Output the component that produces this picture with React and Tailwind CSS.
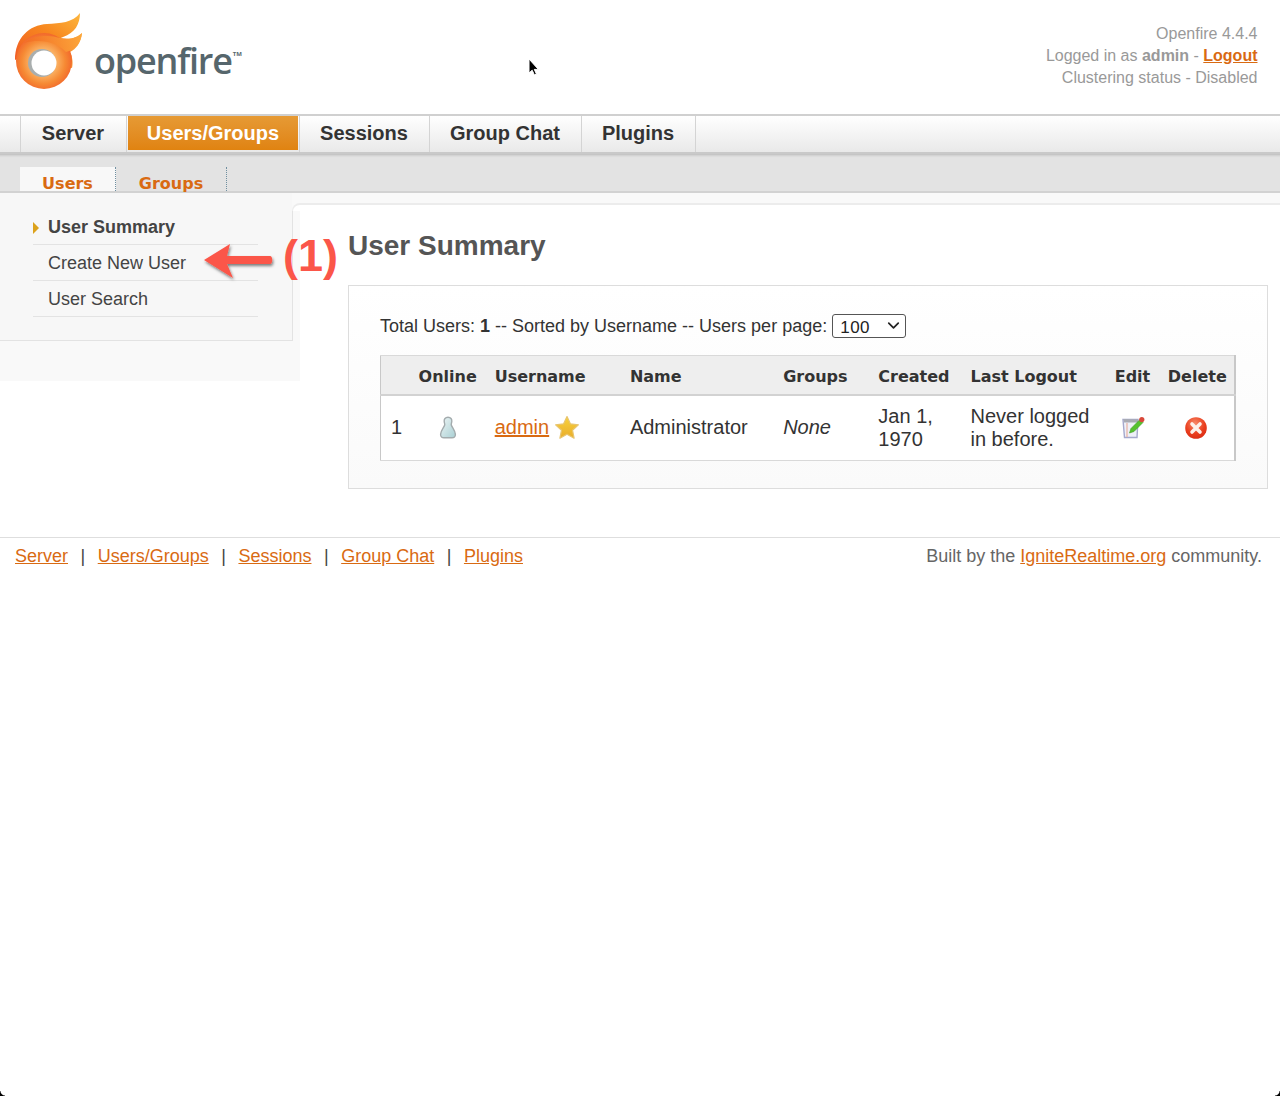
import React from 'react';
import { ChevronDown } from 'lucide-react';

const mainTabs = [
    { label: 'Server', width: 'w-[106px]' },
    { label: 'Users/Groups', width: 'w-[173px]', active: true },
    { label: 'Sessions', width: 'w-[130px]' },
    { label: 'Group Chat', width: 'w-[152px]' },
    { label: 'Plugins', width: 'w-[114px]' },
];

const footerLinks = ['Server', 'Users/Groups', 'Sessions', 'Group Chat', 'Plugins'];

const columns = [
    { label: '', width: 'w-[30px]' },
    { label: 'Online', width: 'w-[76px]' },
    { label: 'Username', width: 'w-[135px]' },
    { label: 'Name', width: 'w-[153px]' },
    { label: 'Groups', width: 'w-[95px]' },
    { label: 'Created', width: 'w-[92px]' },
    { label: 'Last Logout', width: 'w-[144px]' },
    { label: 'Edit', width: 'w-[53px]' },
    { label: 'Delete', width: 'w-[75px]' },
];

function Logo() {
    return (
        <svg width="70" height="80" viewBox="14 12 70 80" className="ml-[14px] mt-[12px] shrink-0">
            <defs>
                <linearGradient id="flameTop" x1="0" y1="1" x2="1" y2="0">
                    <stop offset="0" stopColor="#f15a24" />
                    <stop offset="0.55" stopColor="#f7871f" />
                    <stop offset="1" stopColor="#fdb73e" />
                </linearGradient>
                <linearGradient id="flameLow" x1="0" y1="0.5" x2="1" y2="0.4">
                    <stop offset="0" stopColor="#f26c25" />
                    <stop offset="1" stopColor="#fca63a" />
                </linearGradient>
                <radialGradient id="ring" cx="0.49" cy="0.52" r="0.55">
                    <stop offset="0.4" stopColor="#fbb568" />
                    <stop offset="0.7" stopColor="#f68a34" />
                    <stop offset="1" stopColor="#f1602a" />
                </radialGradient>
            </defs>
            <path d="M15 60C15 38 29 25 47 24C60 23 73 23 80 13C80 24 75 33 63 37L30 52Z" fill="url(#flameTop)" />
            <path d="M24 43C32 36 48 34 60 38C69 40 77 38 82 33C81 43 76 49 70 52C73 58 73 64 72 68L30 60Z" fill="url(#flameLow)" />
            <circle cx="44" cy="61" r="28" fill="url(#ring)" />
            <path d="M24 43C32 36 48 34 60 38C69 40 77 38 82 33C81 43 75 50 66 52C58 43 42 38 24 43Z" fill="url(#flameLow)" />
            <circle cx="42" cy="63" r="14" fill="#a9aeae" />
            <circle cx="44" cy="63" r="12.5" fill="#ffffff" />
        </svg>
    );
}

function UserIcon() {
    return (
        <svg width="18" height="23" viewBox="0 0 18 23">
            <defs>
                <linearGradient id="pawn" x1="0" y1="0" x2="1" y2="1">
                    <stop offset="0" stopColor="#eef5f5" />
                    <stop offset="1" stopColor="#a9d0d4" />
                </linearGradient>
            </defs>
            <path d="M9 1.2C6.2 1.2 5 3.2 5.2 5.4C5.3 7 6 7.8 5.7 9C5.2 11.2 1.8 14.4 1.6 18.4C1.5 20.6 3 21.8 5 21.8H13C15 21.8 16.5 20.6 16.4 18.4C16.2 14.4 12.8 11.2 12.3 9C12 7.8 12.7 7 12.8 5.4C13 3.2 11.8 1.2 9 1.2Z" fill="url(#pawn)" stroke="#a3abad" strokeWidth="1.4" />
        </svg>
    );
}

function StarIcon() {
    return (
        <svg width="26" height="26" viewBox="0 0 26 26">
            <defs>
                <linearGradient id="star" x1="0" y1="0" x2="0" y2="1">
                    <stop offset="0" stopColor="#f8d23c" />
                    <stop offset="1" stopColor="#e9ad2b" />
                </linearGradient>
            </defs>
            <path d="M13 1.5L16.4 8.8L24.4 9.8L18.5 15.2L20.1 23.2L13 19.2L5.9 23.2L7.5 15.2L1.6 9.8L9.6 8.8Z" fill="url(#star)" stroke="#e8c56f" strokeWidth="1.2" strokeLinejoin="round" />
        </svg>
    );
}

function EditIcon() {
    return (
        <svg width="24" height="24" viewBox="0 0 24 24">
            <path d="M2 3.5H17L16 21.5H3.5Z" fill="#eef0f8" stroke="#a5a8cc" strokeWidth="1.4" />
            <path d="M2.5 3L17 3.5V6.5L3 6.5Z" fill="#a9abb3" />
            <path d="M6 7V21" stroke="#eab0a0" strokeWidth="1.2" />
            <path d="M8.5 17L10 12.5L19 3.5L22 6.5L13 15.5Z" fill="#56c22e" stroke="#3d9a22" strokeWidth="0.6" />
            <circle cx="20.8" cy="3.6" r="2.6" fill="#d9483a" />
        </svg>
    );
}

function DeleteIcon() {
    return (
        <svg width="24" height="24" viewBox="0 0 24 24">
            <defs>
                <radialGradient id="del" cx="0.45" cy="0.3" r="0.75">
                    <stop offset="0" stopColor="#f78a6a" />
                    <stop offset="0.6" stopColor="#ea3f1e" />
                    <stop offset="1" stopColor="#d92a12" />
                </radialGradient>
            </defs>
            <circle cx="12" cy="12" r="10.8" fill="url(#del)" />
            <path d="M8 8L16 16M16 8L8 16" stroke="#fdf0ea" strokeWidth="3.6" strokeLinecap="round" />
        </svg>
    );
}

function App() {
    return (
        <div className="relative min-h-[1096px] bg-white overflow-hidden font-['Liberation_Sans',Arial,sans-serif] text-[#333]">
            {/* Header */}
            <header className="flex h-[114px] justify-between">
                <div className="flex items-start">
                    <Logo />
                    <div className="ml-[10px] mt-[36px] flex items-start font-['Open_Sans',sans-serif] text-[36px] font-semibold leading-[50px] tracking-[-1.2px] text-[#56666c]">
                        openfire
                        <span className="ml-[1px] mt-[15px] text-[6px] font-bold leading-[6px] tracking-normal">TM</span>
                    </div>
                </div>
                <div className="pr-[22.5px] pt-[23px] text-right text-[16px] leading-[22px] text-[#999]">
                    <div>Openfire 4.4.4</div>
                    <div>
                        Logged in as <b>admin</b> - <a className="font-bold text-[#d96a12] underline">Logout</a>
                    </div>
                    <div>Clustering status - Disabled</div>
                </div>
            </header>

            {/* Main tabs */}
            <nav className="flex h-[40px] border-y-2 border-t-[#d0d0d0] border-b-[#c9c9c9] bg-gradient-to-b from-white to-[#e9e9e9] pl-[20px]">
                {mainTabs.map((tab) => (
                    <div key={tab.label} className={`flex ${tab.width} shrink-0 border-l border-[#d4d4d4] pr-px`}>
                        <div
                            className={`flex flex-1 items-center justify-center text-[20px] font-bold ${tab.active
                                ? 'mb-[2px] ml-px bg-gradient-to-b from-[#e69a34] to-[#e08310] text-white'
                                : 'mb-[2px] text-[#333]'
                                }`}
                        >
                            {tab.label}
                        </div>
                    </div>
                ))}
                <div className="w-px border-l border-[#d4d4d4]" />
            </nav>

            {/* Sub tabs */}
            <div className="flex h-[39px] items-end border-b-2 border-[#d2d2d2] bg-[#e3e3e3] pl-[20px] font-['DejaVu_Sans',Verdana,sans-serif] text-[16px] font-bold text-[#d96a12] shadow-[inset_0_4px_3px_-3px_#b5b5b5]">
                <div className="flex h-[24px] w-[96px] items-center justify-center border-r border-dotted border-[#6f8fa0] bg-[#f8f8f8] pt-[10px]">Users</div>
                <div className="flex h-[24px] w-[111px] items-center justify-center border-r border-dotted border-[#6f8fa0] pt-[10px]">Groups</div>
            </div>

            <div className="flex">
                {/* Sidebar */}
                <aside className="h-[188px] w-[300px] shrink-0 bg-[#f9f9f9]">
                    <div className="h-[148px] w-[293px] border-r border-b border-[#e3e3e3] bg-[#f7f7f7] pl-[33px] pt-[16px] text-[18px] text-[#444]">
                        <div className="relative flex h-[36px] w-[225px] items-center border-b border-[#e3e3e3] pl-[15px] pt-[2px] font-bold">
                            <span className="absolute left-0 h-0 w-0 border-y-[6px] border-l-[6px] border-y-transparent border-l-[#dca21c]" />
                            User Summary
                        </div>
                        <div className="flex h-[36px] w-[225px] items-center border-b border-[#e3e3e3] pl-[15px] pt-[2px]">Create New User</div>
                        <div className="flex h-[36px] w-[225px] items-center border-b border-[#e3e3e3] pl-[15px] pt-[2px]">User Search</div>
                    </div>
                </aside>

                {/* Content */}
                <main className="min-w-0 flex-1">
                    <div className="-ml-[8px] h-[18px] bg-[#f9f9f9] pt-[10px]">
                        <div className="h-[8px] rounded-tl-[8px] border-t-2 border-l border-[#ececec] bg-white" />
                    </div>
                    <div className="pb-[48px] pl-[48px] pr-[12px]">
                        <h1 className="h-[74px] pt-[16px] text-[28px] font-bold leading-[38px] text-[#555]">User Summary</h1>

                        <div className="h-[204px] border border-[#ddd] bg-gradient-to-b from-white to-[#fafafa] pl-[31px] pr-[32px] pt-[28px]">
                            <div className="flex h-[24px] items-center text-[18px] text-[#333]">
                                <span>Total Users: <b>1</b> -- Sorted by Username -- Users per page:</span>
                                <div className="relative ml-[5px] h-[24px] w-[74px]">
                                    <select className="h-full w-full appearance-none rounded-[3px] border border-[#555] bg-white pl-[7px] text-[17px] tracking-[0.5px] text-[#222]" defaultValue="100">
                                        <option>100</option>
                                    </select>
                                    <ChevronDown className="pointer-events-none absolute right-[3px] top-[2px] h-[19px] w-[19px] text-[#222]" strokeWidth={2.2} />
                                </div>
                            </div>

                            <table className="mt-[17px] w-[856px] table-fixed border-collapse border-y border-l border-y-[#d9d9d9] border-l-[#c8c8c8] border-r-2 border-r-[#c8c8c8]">
                                <thead>
                                    <tr className="h-[39px] border-b-2 border-[#d2d2d2] bg-[#eeeeee] font-['DejaVu_Sans',Verdana,sans-serif] text-[16px] text-[#333]">
                                        {columns.map((col) => (
                                            <th key={col.label} className={`${col.width} whitespace-nowrap pl-[8px] pt-[4px] text-left font-bold`}>{col.label}</th>
                                        ))}
                                    </tr>
                                </thead>
                                <tbody>
                                    <tr className="h-[66px] bg-white text-[20px] leading-[23px] text-[#333]">
                                        <td className="pl-[10px]">1</td>
                                        <td className="pl-[8px]"><div className="flex justify-center pr-[10px]"><UserIcon /></div></td>
                                        <td className="pl-[8px]">
                                            <div className="flex items-center gap-[5px]">
                                                <a className="text-[#d96a12] underline">admin</a>
                                                <StarIcon />
                                            </div>
                                        </td>
                                        <td className="pl-[8px]">Administrator</td>
                                        <td className="pl-[8px] italic">None</td>
                                        <td className="pl-[8px]">Jan 1,<br />1970</td>
                                        <td className="pl-[8px]">Never logged<br />in before.</td>
                                        <td className="pl-[14px]"><EditIcon /></td>
                                        <td className="pl-[24px]"><DeleteIcon /></td>
                                    </tr>
                                </tbody>
                            </table>
                        </div>
                    </div>
                </main>
            </div>

            {/* Footer */}
            <footer className="flex h-[38px] items-center justify-between border-t border-[#dedede] pl-[15px] pr-[18px] text-[18px] text-[#666]">
                <div className="flex items-center">
                    {footerLinks.map((link, i) => (
                        <React.Fragment key={link}>
                            {i > 0 && <span className="px-[12.5px] text-[#444]">|</span>}
                            <a className="text-[#d96a12] underline">{link}</a>
                        </React.Fragment>
                    ))}
                </div>
                <div>Built by the <a className="text-[#d96a12] underline">IgniteRealtime.org</a> community.</div>
            </footer>

            {/* Annotation over the sidebar */}
            <svg className="absolute left-[200px] top-[238px]" width="80" height="46" viewBox="0 0 80 46">
                <defs>
                    <filter id="arrowShadow" x="-20%" y="-30%" width="140%" height="170%">
                        <feDropShadow dx="1" dy="2" stdDeviation="1.5" floodColor="#000" floodOpacity="0.5" />
                    </filter>
                </defs>
                <path d="M4 22L30 6L27 18H70C73 18 73 26 70 26H27L33 40Z" fill="#fb5649" filter="url(#arrowShadow)" />
            </svg>
            <div className="absolute left-[283px] top-[227px] text-[45px] font-bold leading-[58px] text-[#fb5649]">(1)</div>

            {/* Mouse cursor */}
            <svg className="absolute left-[526px] top-[58px]" width="14" height="20" viewBox="0 0 14 20">
                <path d="M3 1V15L6.2 12.2L8.4 17L10.4 16L8.3 11.4H12.4Z" fill="#000" stroke="#fff" strokeWidth="1" />
            </svg>

            {/* Window corners */}
            <div className="absolute bottom-0 left-0 h-[5px] w-[5px] bg-[radial-gradient(circle_at_100%_0,transparent_4px,#000_5px)]" />
            <div className="absolute bottom-0 right-0 h-[5px] w-[5px] bg-[radial-gradient(circle_at_0_0,transparent_4px,#000_5px)]" />
        </div>
    );
}

export default App;
